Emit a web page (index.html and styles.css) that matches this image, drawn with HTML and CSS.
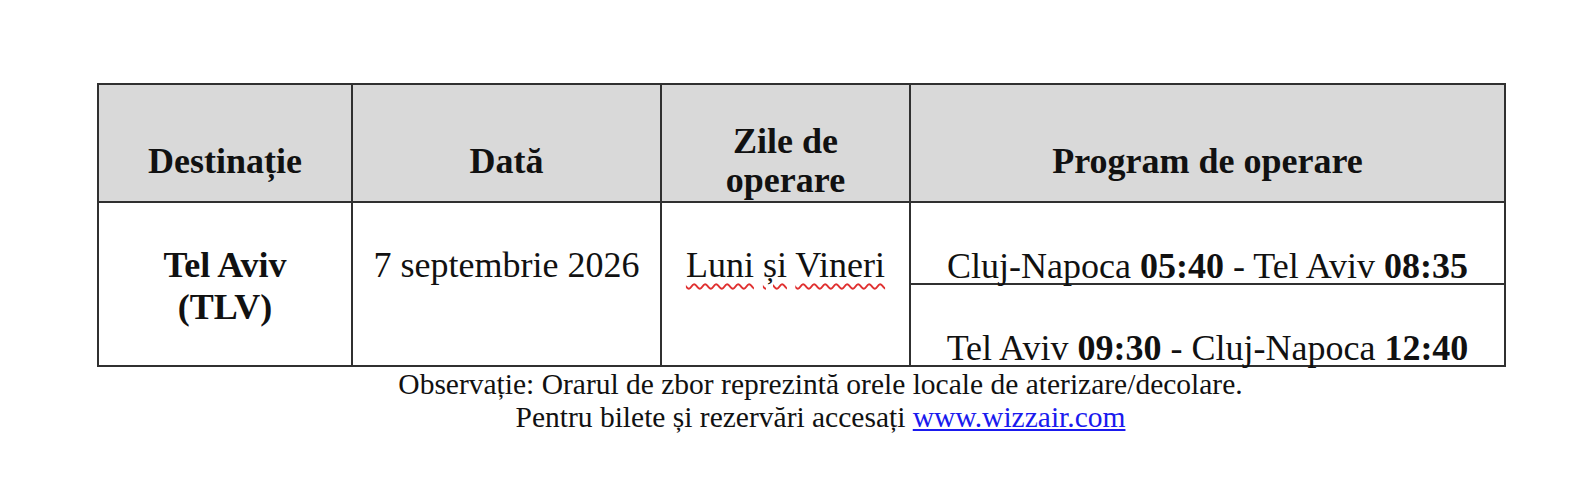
FILE: index.html
```html
<!DOCTYPE html>
<html lang="ro">
<head>
<meta charset="utf-8">
<title>Program zboruri Tel Aviv</title>
<link rel="stylesheet" href="styles.css">
</head>
<body>
<div class="page">
  <table class="schedule">
    <colgroup>
      <col class="c-dest">
      <col class="c-date">
      <col class="c-days">
      <col class="c-prog">
    </colgroup>
    <thead>
      <tr class="head-row">
        <th>Destinație</th>
        <th>Dată</th>
        <th>Zile de<br>operare</th>
        <th>Program de operare</th>
      </tr>
    </thead>
    <tbody>
      <tr class="body-row">
        <td rowspan="2" class="top-cell dest">Tel Aviv<br>(TLV)</td>
        <td rowspan="2" class="top-cell">7 septembrie 2026</td>
        <td rowspan="2" class="top-cell"><span class="spell">Luni</span> <span class="spell">și</span> <span class="spell">Vineri</span></td>
        <td class="prog">Cluj-Napoca <b>05:40</b> - Tel Aviv <b>08:35</b></td>
      </tr>
      <tr class="body-row">
        <td class="prog">Tel Aviv <b>09:30</b> - Cluj-Napoca <b>12:40</b></td>
      </tr>
    </tbody>
  </table>
  <div class="note">
    <p>Observație: Orarul de zbor reprezintă orele locale de aterizare/decolare.</p>
    <p>Pentru bilete și rezervări accesați <a href="#">www.wizzair.com</a></p>
  </div>
</div>
</body>
</html>
```

FILE: styles.css
```css
html, body {
  margin: 0;
  padding: 0;
  background: #ffffff;
}

body {
  font-family: "Liberation Serif", "Times New Roman", serif;
  color: #111111;
}

.page {
  padding-top: 83px;
  padding-left: 97px;
  width: 1407px;
}

.schedule {
  border-collapse: collapse;
  table-layout: fixed;
  width: 1407px;
  font-size: 36px;
}

.c-dest { width: 254px; }
.c-date { width: 309px; }
.c-days { width: 249px; }
.c-prog { width: 595px; }

.schedule th,
.schedule td {
  border: 2px solid #303030;
  text-align: center;
  padding: 0;
}

.schedule th {
  background: #d9d9d9;
  font-weight: bold;
  line-height: 39px;
  vertical-align: middle;
  padding-top: 36px;
  color: #111111;
}

.head-row {
  height: 118px;
}

.body-row {
  height: 82px;
}

.schedule .top-cell {
  vertical-align: top;
  line-height: 42px;
  padding-top: 41px;
}

.schedule .dest {
  font-weight: bold;
}

.schedule .prog {
  vertical-align: bottom;
  line-height: 34px;
  padding-bottom: 0;
}

.prog b {
  font-weight: bold;
}

.spell {
  text-decoration: underline wavy #e03030;
  text-decoration-thickness: 1.5px;
  text-underline-offset: 6px;
}

.note {
  padding-left: 40px;
  text-align: center;
  font-size: 29.5px;
  line-height: 33px;
  padding-top: 1px;
}

.note p {
  margin: 0;
}

.note a {
  color: #1a1aee;
  text-decoration: underline;
}
```
